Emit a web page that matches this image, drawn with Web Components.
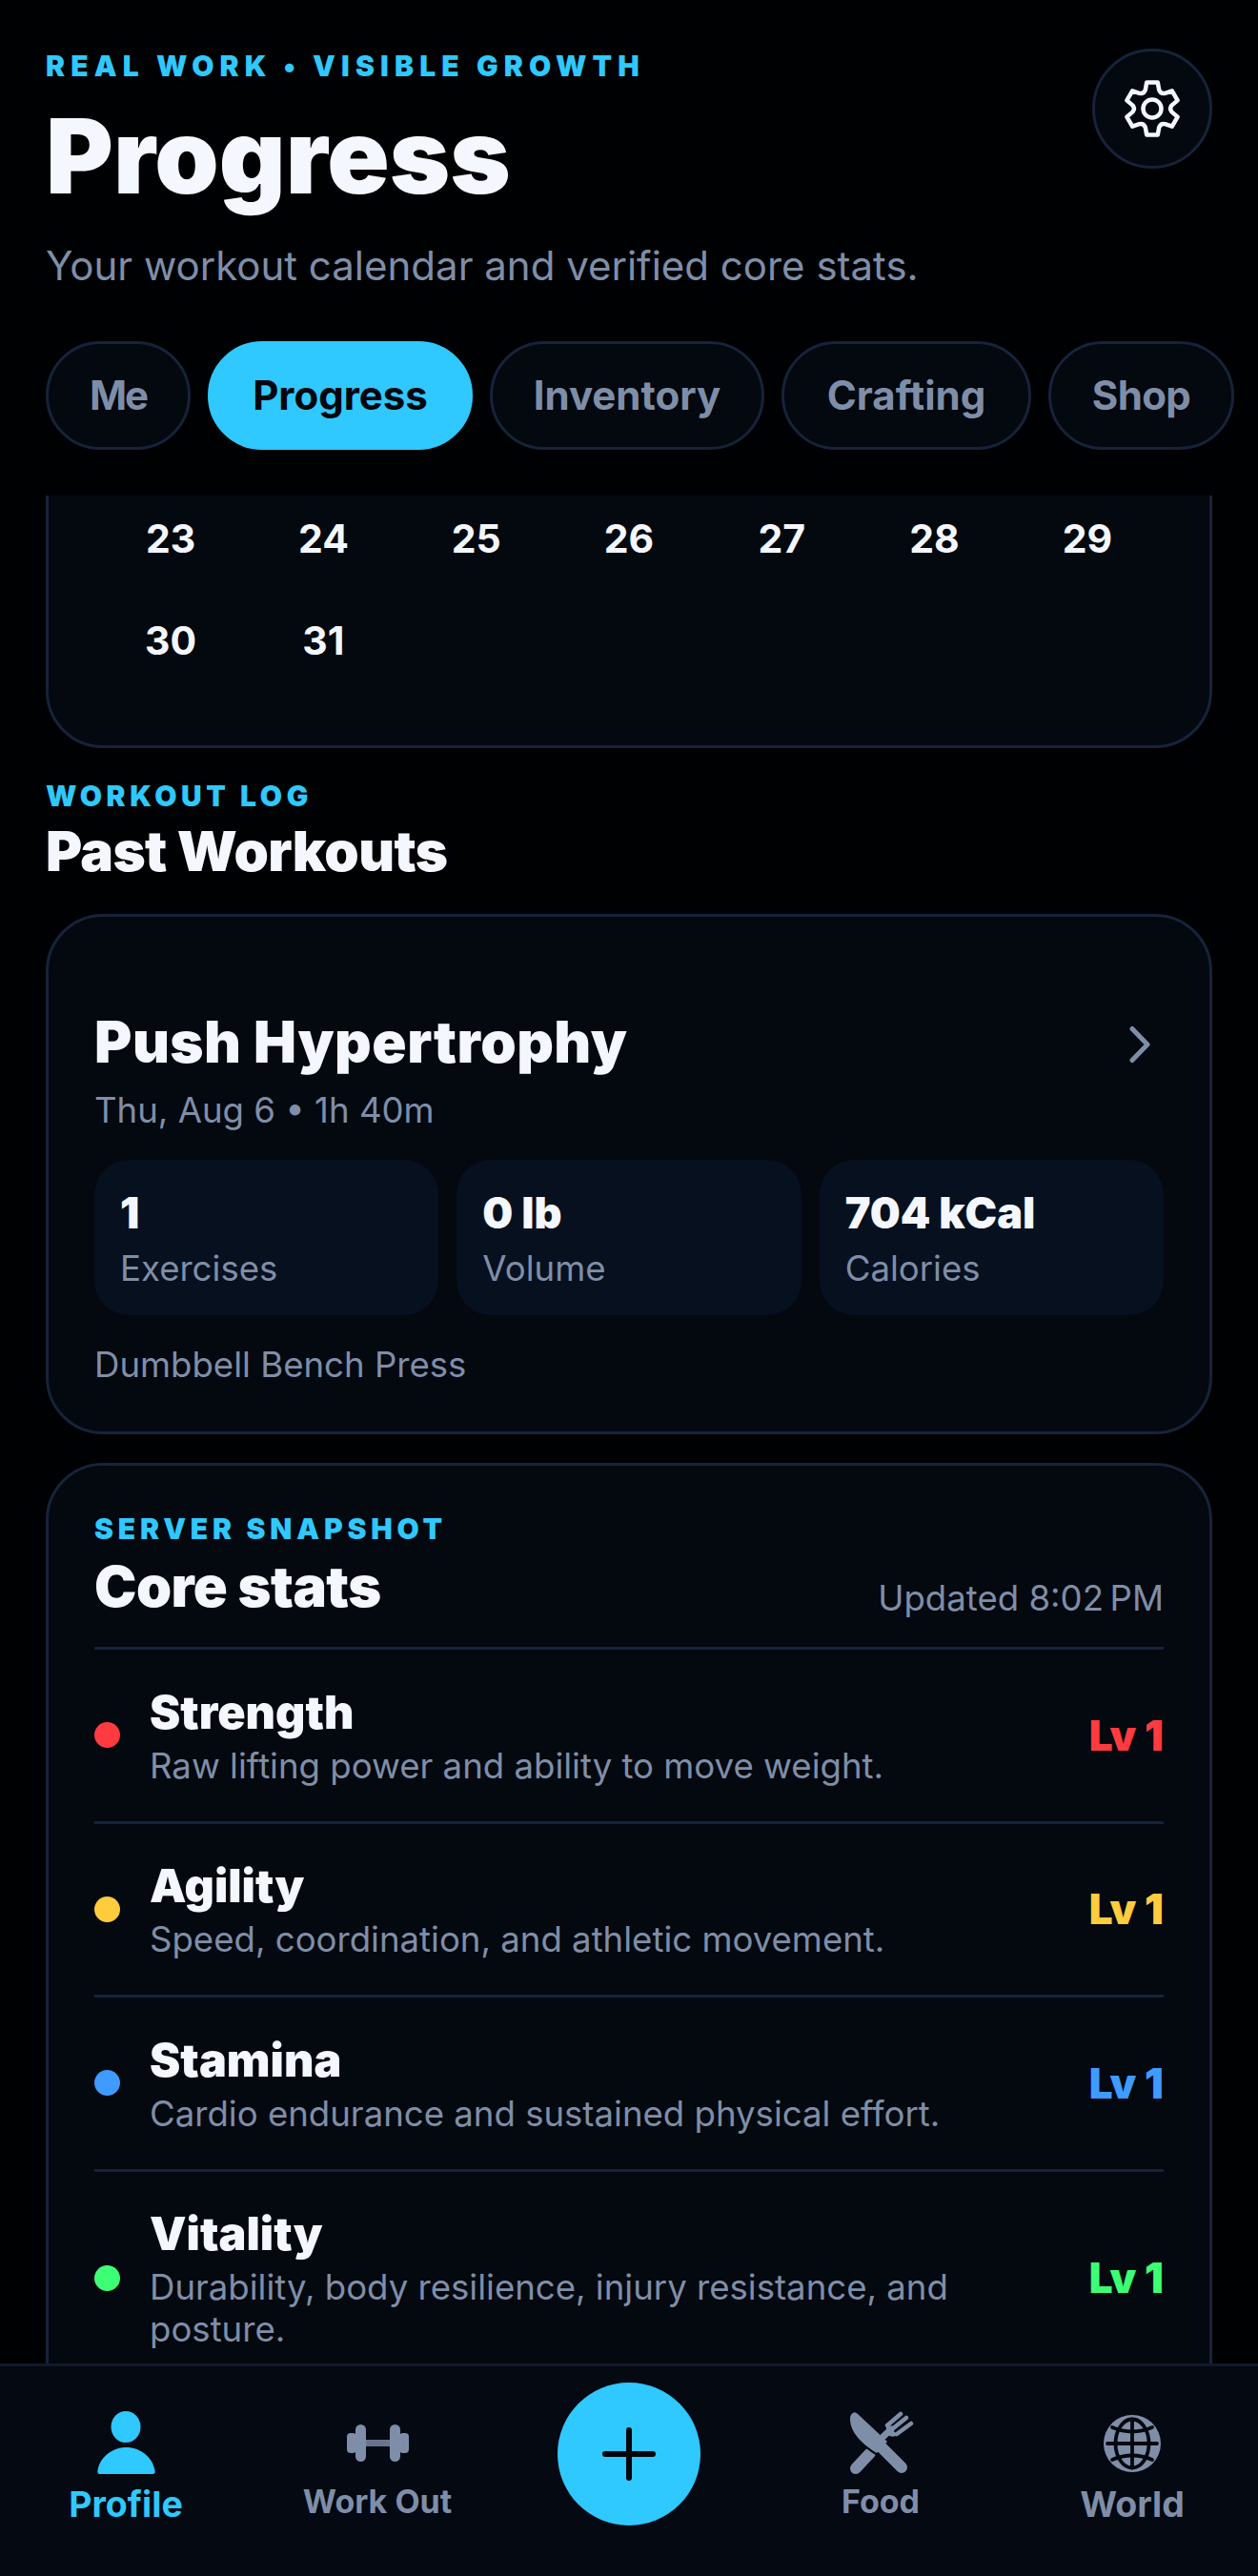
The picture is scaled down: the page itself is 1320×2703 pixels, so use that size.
<!DOCTYPE html>
<html lang="en">
<head>
<meta charset="utf-8">
<title>Progress</title>
<style>
html,body{margin:0;padding:0;background:#000103}
body{font-family:Inter,"Liberation Sans",sans-serif;color:#f4f7fd}
</style>
</head>
<body>
<app-shell>
  <page-header slot="header"></page-header>
  <calendar-tail slot="content"></calendar-tail>
  <section-head slot="content" style="margin-top:32px" eyebrow="WORKOUT LOG" title="Past Workouts"></section-head>
  <workout-card slot="content" style="margin-top:30px" name="Push Hypertrophy" meta="Thu, Aug 6 • 1h 40m" exercises="Dumbbell Bench Press">
    <stat-cell value="1" label="Exercises"></stat-cell>
    <stat-cell value="0 lb" label="Volume"></stat-cell>
    <stat-cell value="704 kCal" label="Calories"></stat-cell>
  </workout-card>
  <core-stats slot="content" style="margin-top:30px">
    <stat-row color="#ff3b3f" name="Strength" desc="Raw lifting power and ability to move weight."></stat-row>
    <stat-row color="#ffcc3d" name="Agility" desc="Speed, coordination, and athletic movement."></stat-row>
    <stat-row color="#3f9bff" name="Stamina" desc="Cardio endurance and sustained physical effort."></stat-row>
    <stat-row color="#3dff74" name="Vitality" desc="Durability, body resilience, injury resistance, and posture."></stat-row>
  </core-stats>
  <bottom-nav slot="nav"></bottom-nav>
</app-shell>
<script>
const el=(name,html)=>customElements.define(name,class extends HTMLElement{
  connectedCallback(){
    if(this.shadowRoot)return;
    const a={};for(const x of this.attributes)a[x.name]=x.value;
    this.attachShadow({mode:'open'}).innerHTML=html(a);
  }
});
const FONT='Inter,"Liberation Sans",sans-serif';
const LINE='#16233a', CARD='#04080f';
function gearPath(cx,cy){
  const p=(deg,r)=>{const t=deg*Math.PI/180;return (cx+r*Math.cos(t)).toFixed(2)+' '+(cy+r*Math.sin(t)).toFixed(2)};
  let d='';
  for(let i=0;i<6;i++){
    const a=-90+60*i;
    d+=(i?'L':'M')+p(a-12,28)+'L'+p(a+12,28)+'L'+p(a+20,21)+'Q'+p(a+30,17.5)+' '+p(a+40,21);
  }
  return d+'Z';
}
el('app-shell',()=>`<style>
:host{display:flex;flex-direction:column;width:1320px;height:2703px;overflow:hidden;background:#000103}
.scroll{flex:1;min-height:0;overflow:hidden;padding:0 48px;display:flex;flex-direction:column}
</style><slot name="header"></slot><div class="scroll"><slot name="content"></slot></div><slot name="nav"></slot>`);

el('page-header',()=>`<style>
:host{display:block;flex:none;height:520px;box-sizing:border-box;padding:51px 0 0 48px;font-family:${FONT}}
.top{display:flex;justify-content:space-between;align-items:flex-start;padding-right:48px}
.eb{font-size:30px;line-height:36px;font-weight:900;letter-spacing:6.15px;color:#2fc8ff}
h1{margin:17px 0 0;font-size:108px;line-height:120px;font-weight:900;letter-spacing:0;color:#f4f7fd}
p{margin:28px 0 0;font-size:42px;line-height:54px;color:#7f8ea8}
.gear{width:126px;height:126px;box-sizing:border-box;border:3px solid ${LINE};border-radius:50%;background:${CARD};display:flex;align-items:center;justify-content:center;flex:none}
.tabs{display:flex;gap:18px;margin-top:52px}
</style>
<div class="top"><div><div class="eb">REAL WORK • VISIBLE GROWTH</div><h1>Progress</h1><p>Your workout calendar and verified core stats.</p></div>
<div class="gear"><svg width="70" height="70" viewBox="0 0 70 70" fill="none" stroke="#f4f7fd" stroke-width="4.5" stroke-linejoin="round"><path d="${gearPath(35,35)}"/><circle cx="35" cy="35" r="9.5"/></svg></div></div>
<div class="tabs"><pill-tab w="152" ls="-2" label="Me"></pill-tab><pill-tab w="278" label="Progress" active></pill-tab><pill-tab w="288" label="Inventory"></pill-tab><pill-tab w="262" label="Crafting"></pill-tab><pill-tab w="195" ls="-.6" label="Shop"></pill-tab></div>`);

el('pill-tab',a=>`<style>
:host{display:block;flex:none}
div{width:${a.w}px;height:114px;box-sizing:border-box;text-align:center;border-radius:57px;border:3px solid ${'active' in a?'#2fc8ff':LINE};background:${'active' in a?'#2fc8ff':CARD};color:${'active' in a?'#03060d':'#7f8ea8'};font:700 42px/108px ${FONT};letter-spacing:${a.ls||0}px}
</style><div>${a.label}</div>`);

el('calendar-tail',()=>{
  const cell=t=>`<span>${t}</span>`;
  return `<style>
:host{display:block;flex:none;margin-top:-60px;font-family:${FONT}}
.card{border:3px solid ${LINE};border-radius:0 0 60px 60px;background:${CARD};padding:48px 48px 57px}
.grid{display:grid;grid-template-columns:repeat(7,1fr);grid-auto-rows:107px;align-items:center;justify-items:center;font-size:41px;font-weight:700;color:#f4f7fd}
</style><div class="card"><div class="grid">${[23,24,25,26,27,28,29,30,31].map(cell).join('')}</div></div>`;
});

el('section-head',a=>`<style>
:host{display:block;flex:none;font-family:${FONT}}
.eb{font-size:30px;line-height:36px;font-weight:900;letter-spacing:4.6px;color:#2fc8ff}
h2{margin:4px 0 0;font-size:58.3px;line-height:72px;font-weight:900;letter-spacing:-.6px;color:#f4f7fd}
</style><div class="eb">${a.eyebrow}</div><h2>${a.title}</h2>`);

el('workout-card',a=>`<style>
:host{display:block;flex:none;font-family:${FONT}}
.card{border:3px solid ${LINE};border-radius:60px;background:${CARD};padding:95px 48px 46px}
.head{display:flex;justify-content:space-between;align-items:center}
h3{margin:0;font-size:60px;line-height:72px;font-weight:900;letter-spacing:.5px;color:#f4f7fd}
.meta{margin-top:9px;font-size:36.6px;line-height:54px;color:#7f8ea8}
.stats{display:grid;grid-template-columns:repeat(3,1fr);gap:19px;margin-top:25px}
.ex{margin-top:28px;font-size:36.6px;line-height:48px;color:#7f8ea8}
svg{margin:6px 13px 0 0}
</style><div class="card"><div class="head"><h3>${a.name}</h3><svg width="24" height="40" viewBox="0 0 24 40" fill="none" stroke="#7f8ea8" stroke-width="5" stroke-linecap="round" stroke-linejoin="round"><path d="M4 3.5 20 20 4 36.5"/></svg></div>
<div class="meta">${a.meta}</div><div class="stats"><slot></slot></div><div class="ex">${a.exercises}</div></div>`);

el('stat-cell',a=>`<style>
:host{display:block;font-family:${FONT}}
div{background:#07101e;border-radius:36px;padding:26px 27px 0;height:163px;box-sizing:border-box}
b{display:block;font-size:45px;line-height:60px;font-weight:900;color:#f4f7fd}
span{display:block;margin-top:4px;font-size:36.6px;line-height:48px;color:#7f8ea8}
</style><div><b>${a.value}</b><span>${a.label}</span></div>`);

el('core-stats',()=>`<style>
:host{display:block;flex:none;font-family:${FONT}}
.card{border:3px solid ${LINE};border-radius:60px 60px 0 0;background:${CARD};padding:48px 48px 0}
.eb{font-size:30px;line-height:36px;font-weight:900;letter-spacing:4.8px;color:#2fc8ff}
.head{display:flex;justify-content:space-between;align-items:flex-end;padding-bottom:31px;border-bottom:3px solid ${LINE}}
h2{margin:9px 0 0;font-size:59.5px;line-height:66px;font-weight:900;letter-spacing:-.6px;color:#f4f7fd}
.up{font-size:36.6px;line-height:40px;color:#7f8ea8}
</style><div class="card"><div class="head"><div><div class="eb">SERVER SNAPSHOT</div><h2>Core stats</h2></div><div class="up">Updated 8:02\u202fPM</div></div><slot></slot></div>`);

el('stat-row',a=>`<style>
:host{display:flex;align-items:center;gap:31px;padding:35.5px 0;box-sizing:content-box;border-bottom:3px solid ${LINE};font-family:${FONT}}
i{flex:none;width:27px;height:27px;border-radius:50%;background:${a.color}}
.t{flex:1;min-width:0}
b{display:block;font-size:48.5px;line-height:60px;font-weight:900;color:#f4f7fd}
span{display:block;margin-top:5px;font-size:36.6px;line-height:43.5px;color:#7f8ea8;max-width:900px}
em{flex:none;font-style:normal;font-size:44px;font-weight:900;color:${a.color}}
</style><i></i><div class="t"><b>${a.name}</b><span>${a.desc}</span></div><em>Lv 1</em>`);

const icons={
 person:`<ellipse cx="35" cy="16.5" rx="15.5" ry="16.5" fill="currentColor"/><path fill="currentColor" d="M8 66Q4.500 66 5.500 62C8 48 21 38 35.500 38C50 38 63 48 65.500 62Q66.500 66 63 66Z"/>`,
 dumbbell:`<g fill="currentColor"><rect x="3" y="23" width="10" height="21" rx="4"/><rect x="12" y="14" width="11" height="39" rx="5.500"/><rect x="22" y="30" width="27" height="7" opacity=".82"/><rect x="48" y="14" width="11" height="39" rx="5.500"/><rect x="58" y="23" width="10" height="21" rx="4"/></g>`,
 food:`<g fill="none" stroke="currentColor" stroke-linecap="round"><path stroke-width="7" d="M30 34 46 19"/><path stroke-width="4.500" d="M42 15 56 3M47 19 62 7M52 24 67 13"/><path stroke-width="12" d="M9 60 24 44"/></g>
 <path fill="currentColor" d="M41 14 53 25Q47 29 41 24Z"/>
 <path fill="none" stroke="${CARD}" stroke-width="3.500" d="M3 10C5 26 18 37 33 46"/>
 <path fill="currentColor" d="M6 2C8 0 10 2 11 3L42 32 31 44C18 36 3 24 3 8 3 5 4 3 6 2Z"/><path fill="none" stroke="currentColor" stroke-width="12" stroke-linecap="round" d="M33 35 57 59"/>`,
 globe:`<circle cx="35" cy="34" r="30" fill="currentColor"/><g fill="none" stroke="${CARD}" stroke-width="3.800" stroke-linecap="round"><path d="M9 34H61M35 8.500V59.500"/><ellipse cx="35" cy="34" rx="17.500" ry="25.500"/><path d="M14 17Q35 26 56 17M14 51Q35 42 56 51"/></g>`
};
el('nav-item',a=>{const big='big' in a;return `<style>
:host{display:flex;flex-direction:column;align-items:center;padding-top:47px;font-family:${FONT};color:${'active' in a?'#2fc8ff':'#7f8ea8'}}
svg{display:block;width:70px;height:68px}
span{margin-top:${big?8:7}px;font-weight:700;white-space:nowrap;font-size:${big?37.5:34}px;line-height:${big?44:40}px}
</style><svg viewBox="0 0 70 68">${icons[a.icon]}</svg><span>${a.label}</span>`});

el('bottom-nav',()=>`<style>
:host{display:grid;grid-template-columns:repeat(5,1fr);flex:none;height:223px;box-sizing:border-box;border-top:3px solid #111a2a;background:#040912}
.fab{justify-self:center;margin-top:17px;width:150px;height:150px;border-radius:50%;background:#2fc8ff;display:flex;align-items:center;justify-content:center}
</style><nav-item icon="person" label="Profile" big active></nav-item><nav-item icon="dumbbell" label="Work Out"></nav-item>
<div class="fab"><svg width="56" height="56" viewBox="0 0 56 56" stroke="#03060d" stroke-width="6" stroke-linecap="round"><path d="M28 3V53M3 28H53"/></svg></div>
<nav-item icon="food" label="Food"></nav-item><nav-item icon="globe" label="World" big></nav-item>`);
</script>
</body>
</html>
